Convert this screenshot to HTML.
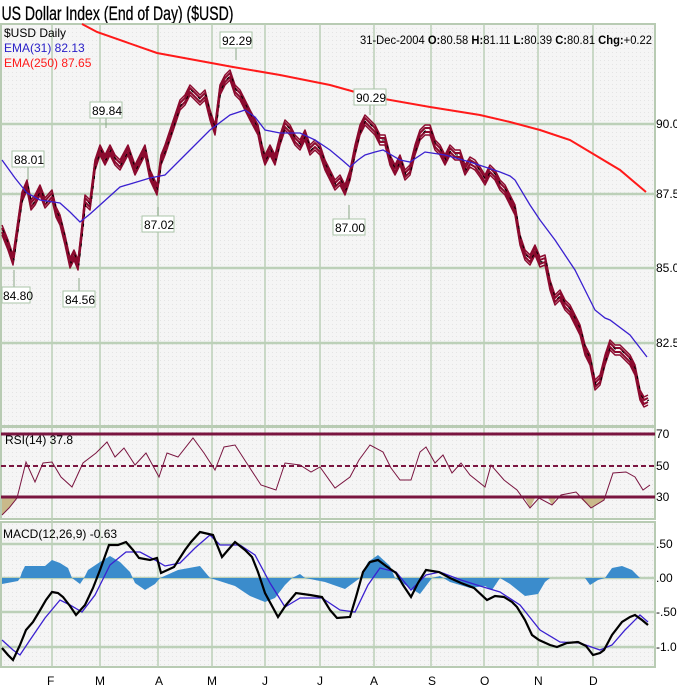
<!DOCTYPE html>
<html><head><meta charset="utf-8"><style>
html,body{margin:0;padding:0;background:#fff;width:677px;height:688px;overflow:hidden}
svg{display:block}
text{font-family:"Liberation Sans",sans-serif}
</style></head><body>
<svg width="677" height="688" viewBox="0 0 677 688" xmlns="http://www.w3.org/2000/svg">
<defs>
<pattern id="dots" width="4" height="4" patternUnits="userSpaceOnUse"><rect width="4" height="4" fill="#f5f5f5"/><rect width="1" height="1" fill="#e4e4e4"/></pattern>
<polyline id="pr" fill="none" stroke-linejoin="round" points="2,230 8,245 13,260 18,225 22,197 27,185 31,205 35,200 40,190 45,203 52,195 56,212 60,220 65,240 70,263 74,255 78,265 82,230 85,200 90,205 95,165 100,150 105,160 110,150 115,160 120,165 128,150 135,170 140,160 145,150 150,175 157,190 161,160 165,150 170,135 175,120 180,105 185,100 190,90 195,95 200,100 205,95 210,115 215,130 220,90 225,80 230,75 235,90 240,95 245,105 250,115 258,130 262,150 265,160 270,150 275,160 280,140 285,125 290,130 295,140 300,145 305,135 310,150 315,145 320,150 325,165 330,175 335,185 340,180 345,190 350,175 355,150 360,130 365,120 370,125 375,130 380,140 385,140 390,160 395,170 400,160 405,175 410,170 415,150 420,135 425,130 430,130 435,145 440,150 445,160 450,150 455,155 460,155 465,170 470,162 475,165 480,172 485,180 490,170 495,175 500,185 505,190 510,200 515,210 520,240 525,255 530,260 535,250 540,262 545,260 550,285 555,300 560,295 565,305 570,310 575,320 580,330 585,350 590,360 595,385 600,380 605,360 610,345 615,350 620,350 625,355 630,360 635,370 640,395 644,402 648,400"/>
</defs>
<rect width="677" height="688" fill="#fff"/>
<text x="2" y="20" font-size="19" transform="scale(0.74,1)" fill="#000" stroke="#000" stroke-width="0.3">US Dollar Index (End of Day) ($USD)</text>
<rect x="1" y="24" width="654" height="402" fill="url(#dots)" stroke="#b8cbb3" stroke-width="2"/>
<rect x="1" y="427" width="654" height="92" fill="url(#dots)" stroke="#b8cbb3" stroke-width="2"/>
<rect x="1" y="522" width="654" height="145" fill="url(#dots)" stroke="#b8cbb3" stroke-width="2"/>
<g stroke="#bcd0b8" stroke-width="1.5">
<path d="M52 24V667M100 24V667M158 24V667M212 24V667M265 24V667M320 24V667M374 24V667M431 24V667M484 24V667M538 24V667M593 24V667"/>
</g>
<g stroke="#bcd0b8" stroke-width="2.5">
<path d="M1 124H655M1 194H655M1 268H655M1 343H655M1 544H655M1 578H655M1 612H655M1 647H655"/>
</g>
<g font-size="12" fill="#000">
<text x="656" y="128">90.0</text><text x="656" y="198">87.5</text><text x="656" y="272">85.0</text><text x="656" y="347">82.5</text>
<text x="656" y="438">70</text><text x="656" y="470">50</text><text x="656" y="501">30</text>
<text x="656" y="548">.50</text><text x="656" y="582">.00</text><text x="656" y="616">-.50</text><text x="656" y="651">-1.0</text>
</g>
<g font-size="12" fill="#000">
<text x="47" y="685">F</text><text x="95" y="685">M</text><text x="155" y="685">A</text><text x="207" y="685">M</text><text x="262" y="685">J</text><text x="317" y="685">J</text><text x="370" y="685">A</text><text x="428" y="685">S</text><text x="480" y="685">O</text><text x="534" y="685">N</text><text x="589" y="685">D</text>
</g>
<polyline fill="none" stroke="#ff1a1a" stroke-width="2" points="82,24 97,32 157,53 233,67 280,75 330,85 373,97 430,107 480,115 510,122 540,130 570,140 595,155 620,170 646,192"/>
<!-- price ribbon -->
<g stroke="#8b0a2e">
<use href="#pr" stroke-width="1.5" transform="translate(0,-5)"/>
<use href="#pr" stroke-width="2" transform="translate(0,-2)"/>
<use href="#pr" stroke-width="2" transform="translate(0,2)"/>
<use href="#pr" stroke-width="1.5" transform="translate(0,5)"/>
</g>
<use href="#pr" stroke="#000" stroke-width="1" stroke-dasharray="3 7" transform="translate(1,0)"/>
<polyline fill="none" stroke="#3a20d0" stroke-width="1.3" points="2,160 15,178 27,193 40,200 60,203 70,212 80,222 90,214 100,205 120,187 150,178 165,175 185,155 210,130 230,115 245,110 255,117 265,130 280,133 300,133 315,140 330,150 342,160 350,167 358,160 365,155 375,152 383,150 400,160 410,162 425,152 445,155 470,162 500,172 510,176 515,180 530,205 540,220 555,240 575,270 595,310 605,318 610,320 630,335 647,357"/>
<g font-size="12" fill="#000">
<text x="4" y="37">$USD Daily</text>
<text x="4" y="52" fill="#2a20c8">EMA(31) 82.13</text>
<text x="4" y="67" fill="#ff1a1a">EMA(250) 87.65</text>
<text x="360" y="44" font-size="12" textLength="292" lengthAdjust="spacingAndGlyphs">31-Dec-2004 <tspan font-weight="bold">O:</tspan>80.58 <tspan font-weight="bold">H:</tspan>81.11 <tspan font-weight="bold">L:</tspan>80.39 <tspan font-weight="bold">C:</tspan>80.81 <tspan font-weight="bold">Chg:</tspan>+0.22</text>
</g>
<g stroke="#8aa888" stroke-width="1" fill="none">
<path d="M28 167V180M106 118V128M236 48V60M370 105V115M14 287V270M79 291V278M158 216V207M349 219V205"/>
</g>
<g font-size="12" fill="#000">
<rect x="12" y="151" width="32" height="16" fill="#fff" stroke="#aac4a8"/><text x="14" y="164">88.01</text>
<rect x="90" y="102" width="32" height="16" fill="#fff" stroke="#aac4a8"/><text x="92" y="115">89.84</text>
<rect x="220" y="32" width="32" height="16" fill="#fff" stroke="#aac4a8"/><text x="222" y="45">92.29</text>
<rect x="354" y="89" width="32" height="16" fill="#fff" stroke="#aac4a8"/><text x="356" y="102">90.29</text>
<rect x="2" y="287" width="28" height="16" fill="#fff" stroke="#aac4a8"/><text x="3" y="300">84.80</text>
<rect x="63" y="291" width="32" height="16" fill="#fff" stroke="#aac4a8"/><text x="65" y="304">84.56</text>
<rect x="142" y="216" width="32" height="16" fill="#fff" stroke="#aac4a8"/><text x="144" y="229">87.02</text>
<rect x="333" y="219" width="32" height="16" fill="#fff" stroke="#aac4a8"/><text x="335" y="232">87.00</text>
</g>
<path d="M2 498 L2 515 9 508 17 498Z M525 498 L530 508 535 498Z M548 498 L552 505 556 498Z M580 498 L591 508 604 500 606 498Z" fill="#c9b98a"/>
<path d="M1 434H655M1 497H655" stroke="#7a1540" stroke-width="3"/>
<path d="M1 466H655" stroke="#7a1540" stroke-width="2" stroke-dasharray="5,3"/>
<polyline fill="none" stroke="#7a1540" stroke-width="1" points="2,515 9,508 17,498 26,462 35,482 43,463 52,462 61,477 72,487 83,463 96,453 107,442 115,457 124,448 135,465 146,453 159,477 167,453 178,457 193,438 204,453 215,470 224,447 235,445 246,462 261,485 276,490 285,463 300,465 311,472 320,467 335,488 350,477 359,460 370,445 383,452 391,468 400,480 411,480 420,452 426,447 435,463 443,455 452,473 461,463 470,475 485,487 491,465 504,480 517,490 530,508 539,498 552,505 561,495 576,492 591,508 604,500 613,473 626,472 635,477 643,490 650,485"/>
<text x="5" y="444" font-size="12">RSI(14) 37.8</text>
<path fill="#3b8ccc" d="M2 578 L2 584 18 581 20 578 22 572 25 566 45 566 52 560 60 563 68 568 72 578 80 584 84 578 88 570 100 562 110 556 120 562 130 572 135 583 145 590 155 584 160 578 178 570 200 566 210 578 235 586 250 596 265 602 275 598 285 585 292 578 300 574 305 578 325 582 345 589 360 578 368 562 378 555 390 566 395 578 410 588 420 594 432 578 440 576 450 582 470 588 485 586 492 590 500 578 510 584 525 596 538 594 545 582 550 578 585 578 590 585 598 580 605 578 612 568 622 566 632 570 640 578 Z"/>
<polyline fill="none" stroke="#3a20d0" stroke-width="1.3" points="2,640 13,650 20,655 30,640 45,618 60,600 70,605 82,612 95,595 110,565 126,552 140,552 155,560 165,566 180,563 195,548 210,535 220,545 240,545 255,555 270,583 285,607 300,598 322,598 340,610 355,612 368,585 380,568 396,572 411,590 426,575 440,572 461,580 480,586 500,592 520,605 540,630 560,642 580,643 600,650 612,645 625,630 640,615 648,622"/>
<polyline fill="none" stroke="#000" stroke-width="2.2" points="2,648 8,655 13,660 20,645 26,630 33,622 39,612 46,600 52,592 58,593 63,597 70,606 76,615 85,605 93,588 100,570 109,545 118,545 126,542 133,550 139,558 150,560 157,558 161,573 174,567 185,550 191,542 200,532 213,535 222,557 228,550 235,542 245,550 252,557 258,572 265,593 278,617 286,605 296,593 310,595 322,597 330,610 337,618 350,617 356,597 363,572 370,562 378,560 386,566 396,573 403,585 411,597 418,583 426,570 439,572 450,578 461,583 474,588 487,600 495,596 504,597 512,602 517,607 525,620 532,635 539,640 550,645 557,647 567,643 578,642 586,646 593,655 600,653 604,650 612,635 622,622 630,617 635,615 642,620 648,625"/>
<text x="3" y="538" font-size="12">MACD(12,26,9) -0.63</text>
</svg>
</body></html>
